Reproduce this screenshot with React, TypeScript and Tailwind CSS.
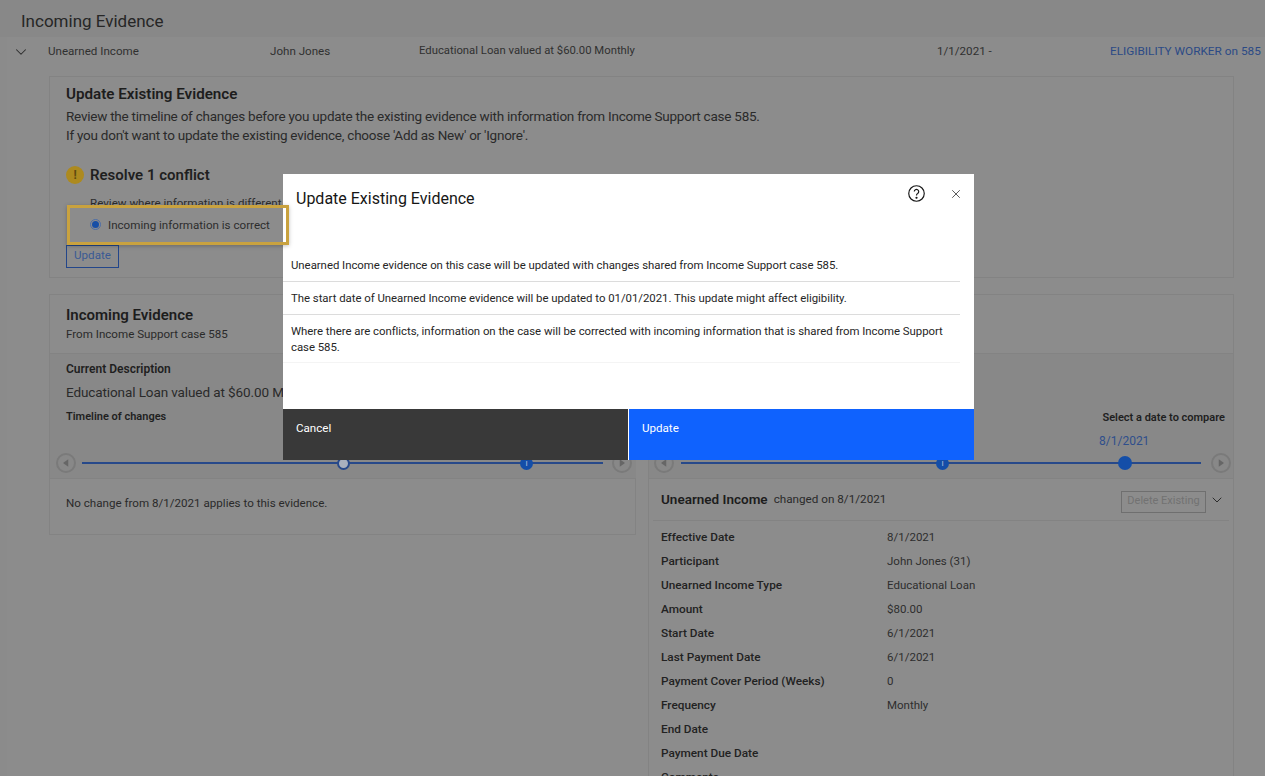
import { ChevronDown, X } from "lucide-react";

const details = [
  ["Effective Date", "8/1/2021"],
  ["Participant", "John Jones (31)"],
  ["Unearned Income Type", "Educational Loan"],
  ["Amount", "$80.00"],
  ["Start Date", "6/1/2021"],
  ["Last Payment Date", "6/1/2021"],
  ["Payment Cover Period (Weeks)", "0"],
  ["Frequency", "Monthly"],
  ["End Date", ""],
  ["Payment Due Date", ""],
  ["Comments", ""],
];

const ArrowButton = ({ dir }: { dir: "left" | "right" }) => (
  <span className="flex h-[20px] w-[20px] shrink-0 items-center justify-center rounded-full border-2 border-[#7a7a7a] text-[#666666]">
    <svg viewBox="0 0 8 10" className="h-[8px] w-[6px]" fill="currentColor">
      {dir === "left" ? <path d="M7 0v10L0 5z" /> : <path d="M1 0v10l7-5z" />}
    </svg>
  </span>
);

const InfoNode = ({ left }: { left: string }) => (
  <span
    className={`absolute top-[-5px] flex h-[13px] w-[13px] items-center justify-center rounded-full bg-[#144ea8] text-[9px] leading-none text-[#a9b9d6] ${left}`}
  >
    i
  </span>
);

const App = () => {
  return (
    <div className="relative h-[776px] w-[1265px] overflow-hidden bg-[#8b8b8b] font-['Roboto',sans-serif] text-[11.6px] text-[#222222]">
      {/* Page heading */}
      <div className="flex h-[37px] items-center bg-[#888888] pl-[21px] pt-[7px] text-[17px] text-[#262626]">
        Incoming Evidence
      </div>

      <div className="ml-[7px] bg-[#8c8c8c] pb-[20px]">
        {/* Evidence row */}
        <div className="flex h-[29px] items-center text-[#303030]">
          <ChevronDown className="ml-[5px] h-[18px] w-[18px] text-[#2c2c2c]" strokeWidth={1.4} />
          <span className="ml-[18px] w-[222px]">Unearned Income</span>
          <span className="w-[149px]">John Jones</span>
          <span className="w-[518px] text-[11.3px]">Educational Loan valued at $60.00 Monthly</span>
          <span className="w-[173px]">1/1/2021 -</span>
          <span className="text-[11.8px] text-[#2b4a86]">ELIGIBILITY WORKER on 585</span>
        </div>

        {/* Update card */}
        <div className="ml-[42px] mt-[10px] h-[202px] w-[1185px] border border-[#838383] pl-[16px] pt-[8px]">
          <h3 className="text-[15.2px] font-semibold leading-[19px] text-[#1d1d1d]">Update Existing Evidence</h3>
          <p className="mt-[3px] text-[13.5px] leading-[19px] tracking-[-0.24px] text-[#2a2a2a]">
            Review the timeline of changes before you update the existing evidence with information from Income Support case 585.
            <br />
            If you don't want to update the existing evidence, choose 'Add as New' or 'Ignore'.
          </p>
          <div className="mt-[19px] flex items-center gap-[6px]">
            <span className="flex h-[18px] w-[18px] items-center justify-center rounded-full bg-[#ad8a1f] text-[12px] font-bold leading-none text-[#5e4a10]">
              !
            </span>
            <span className="text-[15px] font-semibold text-[#1f1f1f]">Resolve 1 conflict</span>
          </div>
          <p className="ml-[24px] mt-[9px] leading-[14px] text-[#2c2c2c]">Review where information is different</p>
          <div className="ml-[24px] mt-[9px] flex h-[15px] items-center gap-[7px]">
            <span className="mb-[4px] flex h-[11px] w-[11px] items-center justify-center rounded-full border border-[#4c6ea8]">
              <span className="h-[7px] w-[7px] rounded-full bg-[#174ea6]" />
            </span>
            <span className="text-[#2c2c2c]">Incoming information is correct</span>
          </div>
          <button className="mt-[11px] h-[23px] w-[53px] border border-[#23468a] text-[#3a5a94]">Update</button>
        </div>

        {/* Incoming evidence card */}
        <div className="ml-[42px] mt-[16px] w-[1185px] border-t border-[#838383]">
          <div className="h-[59px] border-x border-b border-[#838383] pl-[16px] pt-[10px]">
            <h3 className="text-[15px] font-semibold leading-[20px] text-[#1d1d1d]">Incoming Evidence</h3>
            <p className="leading-[18px] text-[#2a2a2a]">From Income Support case 585</p>
          </div>

          <div className="flex gap-[12px]">
            {/* Left column */}
            <div className="w-[587px] shrink-0">
              <div className="h-[125px] border-b border-l border-[#838383] bg-[#888888] pl-[16px] pt-[8px]">
                <div className="text-[12px] font-semibold leading-[15px] text-[#1f1f1f]">Current Description</div>
                <div className="mt-[6px] text-[13.5px] leading-[19px] tracking-[-0.1px] text-[#2a2a2a]">Educational Loan valued at $60.00 Monthly</div>
                <div className="mt-[8px] text-[11px] font-semibold leading-[14px] text-[#1f1f1f]">Timeline of changes</div>
                <div className="-ml-[10px] mt-[29px] flex items-center gap-[6px]">
                  <ArrowButton dir="left" />
                  <div className="relative mr-[3px] h-[2px] w-[521px] bg-[#27498a]">
                    <span className="absolute left-[255px] top-[-5px] h-[13px] w-[13px] rounded-full border-2 border-[#27498a] bg-[#a8b0be]" />
                    <InfoNode left="left-[438px]" />
                  </div>
                  <ArrowButton dir="right" />
                </div>
              </div>
              <div className="h-[56px] border-x border-b border-[#838383] pl-[16px] pt-[16px] leading-[16px] text-[#2a2a2a]">
                No change from 8/1/2021 applies to this evidence.
              </div>
            </div>

            {/* Right column */}
            <div className="h-[500px] flex-1 border-x border-[#838383]">
              <div className="relative h-[125px] border-b border-[#838383] bg-[#888888]">
                <div className="absolute right-[8px] top-[56px] text-[11px] font-semibold text-[#1f1f1f]">Select a date to compare</div>
                <div className="absolute left-[450px] top-[78px] text-[12px] text-[#2f4f8c]">8/1/2021</div>
                <div className="flex items-center gap-[7px] pl-[5px] pt-[99px]">
                  <ArrowButton dir="left" />
                  <div className="relative mr-[3px] h-[2px] w-[520px] bg-[#27498a]">
                    <InfoNode left="left-[255px]" />
                    <span className="absolute left-[437px] top-[-6px] h-[14px] w-[14px] rounded-full bg-[#144ea8]" />
                  </div>
                  <ArrowButton dir="right" />
                </div>
              </div>
              <div className="mx-[4px] flex h-[42px] items-center border-b border-[#838383] pl-[8px]">
                <span className="text-[13.5px] font-semibold text-[#1d1d1d]">Unearned Income</span>
                <span className="ml-[6px] text-[11.7px] text-[#2a2a2a]">changed on 8/1/2021</span>
                <button className="ml-auto mt-[4px] h-[22px] w-[85px] border border-[#6f6f6f] text-[11px] text-[#727272]">Delete Existing</button>
                <ChevronDown className="ml-[3px] mr-[4px] mt-[1px] h-[16px] w-[16px] text-[#2c2c2c]" strokeWidth={1.5} />
              </div>
              <div className="pl-[12px] pt-[5px]">
                {details.map(([label, value]) => (
                  <div key={label} className="flex h-[24px] items-center">
                    <span className="w-[226px] text-[11.8px] font-medium text-[#222222]">{label}</span>
                    <span className="text-[11.5px] text-[#2e2e2e]">{value}</span>
                  </div>
                ))}
              </div>
            </div>
          </div>
        </div>
      </div>

      {/* Modal */}
      <div className="absolute left-[283px] top-[174px] flex h-[286px] w-[691px] flex-col bg-white">
        <div className="flex h-[48px] items-start justify-between pl-[13px] pr-[11px] pt-[15px]">
          <h2 className="text-[16px] leading-[20px] text-[#161616]">Update Existing Evidence</h2>
          <div className="-mt-[4px] flex items-center gap-[24px]">
            <svg viewBox="0 0 16 16" className="h-[17px] w-[17px] text-[#161616]" fill="none" stroke="currentColor" strokeWidth="1.1">
              <circle cx="8" cy="8" r="7.3" />
              <path d="M5.9 6.2a2.1 2.1 0 1 1 3.2 1.8c-.7.4-1.1.9-1.1 1.8" />
              <circle cx="8" cy="12" r=".5" fill="currentColor" />
            </svg>
            <X className="h-[14px] w-[14px] text-[#161616]" strokeWidth={1.2} />
          </div>
        </div>
        <div className="mr-[14px] mt-[35px] flex-1 text-[11.4px] tracking-[-0.03px] text-[#262626]">
          <p className="h-[25px] border-b border-[#dcdcdc] pl-[8px] leading-[16px]">
            Unearned Income evidence on this case will be updated with changes shared from Income Support case 585.
          </p>
          <p className="h-[33px] border-b border-[#dcdcdc] pl-[8px] pt-[8px] leading-[16px]">
            The start date of Unearned Income evidence will be updated to 01/01/2021. This update might affect eligibility.
          </p>
          <p className="h-[48px] border-b border-[#f4f4f4] pl-[8px] pt-[8px] leading-[16px]">
            Where there are conflicts, information on the case will be corrected with incoming information that is shared from Income Support
            <br />
            case 585.
          </p>
        </div>
        <div className="flex h-[51px] shrink-0 gap-[1px] text-[11.6px] text-white">
          <button className="h-full w-[345px] bg-[#393939] pb-[13px] pl-[13px] text-left leading-[14px]">Cancel</button>
          <button className="h-full flex-1 bg-[#0f62fe] pb-[13px] pl-[13px] text-left leading-[14px]">Update</button>
        </div>
      </div>

      {/* Callout around the radio */}
      <div className="pointer-events-none absolute left-[67px] top-[205px] h-[40px] w-[222px] border-[3px] border-[#c9a23f] shadow-[0_1px_4px_rgba(0,0,0,0.25)]" />
    </div>
  );
};

export default App;
